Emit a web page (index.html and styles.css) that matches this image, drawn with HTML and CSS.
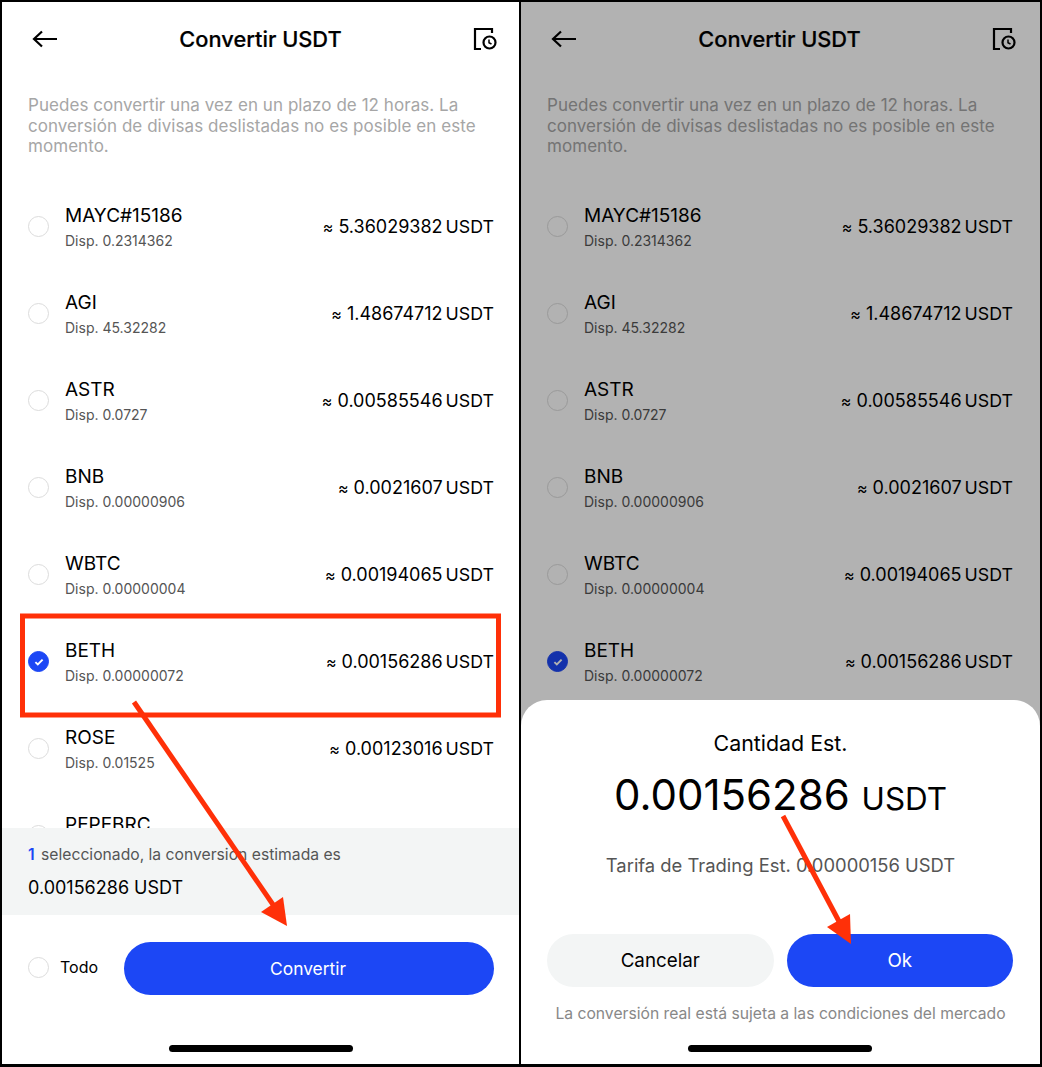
FILE: index.html
```html
<!DOCTYPE html>
<html lang="es">
<head>
    <meta charset="UTF-8">
    <meta name="viewport" content="width=device-width, initial-scale=1.0">
    <title>Convertir USDT</title>
    <link rel="stylesheet" href="styles.css">
</head>
<body>
    <div class="frame">
        <!-- pantalla izquierda -->
        <section class="phone">
            <header class="topbar">
                <svg class="icon-back" width="28" height="20" viewBox="0 0 28 20"><path d="M26 10H3M11 2.5 3 10l8 7.5" fill="none" stroke="#000" stroke-width="2.2"/></svg>
                <h1>Convertir USDT</h1>
                <svg class="icon-history" width="26" height="26" viewBox="0 0 26 26"><path d="M20 7V3H3v20h6" fill="none" stroke="#000" stroke-width="2.2"/><circle cx="17.5" cy="16.5" r="6" fill="none" stroke="#000" stroke-width="2.2"/><path d="M17 13.5v3.2l2.5 1.3" fill="none" stroke="#000" stroke-width="1.5"/></svg>
            </header>
            <p class="note">Puedes convertir una vez en un plazo de 12 horas. La conversión de divisas deslistadas no es posible en este momento.</p>
            <div class="list">
                <div class="row"><span class="radio"></span><div class="coin"><div class="name">MAYC#15186</div><div class="avail">Disp. 0.2314362</div></div><div class="value"><span class="approx">≈</span> 5.36029382<span class="unit">USDT</span></div></div>
                <div class="row"><span class="radio"></span><div class="coin"><div class="name">AGI</div><div class="avail">Disp. 45.32282</div></div><div class="value"><span class="approx">≈</span> 1.48674712<span class="unit">USDT</span></div></div>
                <div class="row"><span class="radio"></span><div class="coin"><div class="name">ASTR</div><div class="avail">Disp. 0.0727</div></div><div class="value"><span class="approx">≈</span> 0.00585546<span class="unit">USDT</span></div></div>
                <div class="row"><span class="radio"></span><div class="coin"><div class="name">BNB</div><div class="avail">Disp. 0.00000906</div></div><div class="value"><span class="approx">≈</span> 0.0021607<span class="unit">USDT</span></div></div>
                <div class="row"><span class="radio"></span><div class="coin"><div class="name">WBTC</div><div class="avail">Disp. 0.00000004</div></div><div class="value"><span class="approx">≈</span> 0.00194065<span class="unit">USDT</span></div></div>
                <div class="row"><span class="radio checked"><svg width="10" height="8" viewBox="0 0 12 10"><path d="M1.5 5.2 4.5 8l6-6" fill="none" stroke="#fff" stroke-width="2.4"/></svg></span><div class="coin"><div class="name">BETH</div><div class="avail">Disp. 0.00000072</div></div><div class="value"><span class="approx">≈</span> 0.00156286<span class="unit">USDT</span></div></div>
                <div class="row"><span class="radio"></span><div class="coin"><div class="name">ROSE</div><div class="avail">Disp. 0.01525</div></div><div class="value"><span class="approx">≈</span> 0.00123016<span class="unit">USDT</span></div></div>
                <div class="row row-cut"><span class="radio"></span><div class="coin"><div class="name">PEPEBRC</div></div></div>
            </div>
            <div class="summary">
                <div class="summary-label"><b>1</b> seleccionado, la conversión estimada es</div>
                <div class="summary-value">0.00156286 USDT</div>
            </div>
            <div class="actions">
                <span class="radio"></span>
                <span class="all">Todo</span>
                <button class="btn btn-primary btn-convert">Convertir</button>
            </div>
            <div class="home-bar"></div>
            <svg class="marks" width="519" height="1067" viewBox="0 0 519 1067">
                <rect x="22.5" y="616" width="476" height="99" fill="none" stroke="#ff3008" stroke-width="5"/>
                <path d="M134 702 276 909" stroke="#ff3008" stroke-width="5" fill="none"/>
                <path d="M287 926 283 897 261 912Z" fill="#ff3008"/>
            </svg>
        </section>

        <!-- pantalla derecha con el dialogo -->
        <section class="phone phone-dialog">
            <header class="topbar">
                <svg class="icon-back" width="28" height="20" viewBox="0 0 28 20"><path d="M26 10H3M11 2.5 3 10l8 7.5" fill="none" stroke="#000" stroke-width="2.2"/></svg>
                <h1>Convertir USDT</h1>
                <svg class="icon-history" width="26" height="26" viewBox="0 0 26 26"><path d="M20 7V3H3v20h6" fill="none" stroke="#000" stroke-width="2.2"/><circle cx="17.5" cy="16.5" r="6" fill="none" stroke="#000" stroke-width="2.2"/><path d="M17 13.5v3.2l2.5 1.3" fill="none" stroke="#000" stroke-width="1.5"/></svg>
            </header>
            <p class="note">Puedes convertir una vez en un plazo de 12 horas. La conversión de divisas deslistadas no es posible en este momento.</p>
            <div class="list">
                <div class="row"><span class="radio"></span><div class="coin"><div class="name">MAYC#15186</div><div class="avail">Disp. 0.2314362</div></div><div class="value"><span class="approx">≈</span> 5.36029382<span class="unit">USDT</span></div></div>
                <div class="row"><span class="radio"></span><div class="coin"><div class="name">AGI</div><div class="avail">Disp. 45.32282</div></div><div class="value"><span class="approx">≈</span> 1.48674712<span class="unit">USDT</span></div></div>
                <div class="row"><span class="radio"></span><div class="coin"><div class="name">ASTR</div><div class="avail">Disp. 0.0727</div></div><div class="value"><span class="approx">≈</span> 0.00585546<span class="unit">USDT</span></div></div>
                <div class="row"><span class="radio"></span><div class="coin"><div class="name">BNB</div><div class="avail">Disp. 0.00000906</div></div><div class="value"><span class="approx">≈</span> 0.0021607<span class="unit">USDT</span></div></div>
                <div class="row"><span class="radio"></span><div class="coin"><div class="name">WBTC</div><div class="avail">Disp. 0.00000004</div></div><div class="value"><span class="approx">≈</span> 0.00194065<span class="unit">USDT</span></div></div>
                <div class="row"><span class="radio checked"><svg width="10" height="8" viewBox="0 0 12 10"><path d="M1.5 5.2 4.5 8l6-6" fill="none" stroke="#fff" stroke-width="2.4"/></svg></span><div class="coin"><div class="name">BETH</div><div class="avail">Disp. 0.00000072</div></div><div class="value"><span class="approx">≈</span> 0.00156286<span class="unit">USDT</span></div></div>
            </div>
            <div class="dim"></div>
            <div class="sheet">
                <div class="sheet-title">Cantidad Est.</div>
                <div class="sheet-amount">0.00156286 <span class="sheet-unit">USDT</span></div>
                <div class="sheet-fee">Tarifa de Trading Est. 0.00000156 USDT</div>
                <div class="sheet-buttons">
                    <button class="btn btn-light">Cancelar</button>
                    <button class="btn btn-primary">Ok</button>
                </div>
                <div class="sheet-foot">La conversión real está sujeta a las condiciones del mercado</div>
            </div>
            <div class="home-bar"></div>
            <svg class="marks" width="523" height="1067" viewBox="0 0 523 1067">
                <path d="M264 816 323 927" stroke="#ff3008" stroke-width="5" fill="none"/>
                <path d="M332 944 331 914 308 927Z" fill="#ff3008"/>
            </svg>
        </section>
    </div>
</body>
</html>
```

FILE: styles.css
```css
* {
    box-sizing: border-box;
}
body {
    margin: 0;
    background: #fff;
    font-family: Inter, "Liberation Sans", sans-serif;
    color: #000;
}
.frame {
    display: flex;
    width: 1042px;
    height: 1067px;
    overflow: hidden;
}
.phone {
    position: relative;
    display: flex;
    flex-direction: column;
    width: 519px;
    height: 1067px;
    border-left: 2px solid #000;
    border-top: 2px solid #000;
    border-bottom: 3px solid #000;
    background: #fff;
    overflow: hidden;
}
.phone-dialog {
    width: 523px;
    border-right: 2px solid #000;
}
.topbar {
    display: grid;
    grid-template-columns: 1fr auto 1fr;
    align-items: center;
    width: 517px;
    height: 74px;
    padding: 0 22px;
}
.topbar h1 {
    margin: 0;
    font-size: 21.8px;
    font-weight: 500;
    -webkit-text-stroke: 0.2px #000;
}
.icon-back {
    margin-left: 7px;
}
.icon-history {
    justify-self: end;
    margin-right: -1px;
}
.note {
    margin: 19px 0 0;
    padding: 0 26px;
    width: 517px;
    height: 77px;
    font-size: 17px;
    line-height: 20.5px;
    letter-spacing: 0.05px;
    color: #a6a6a6;
}
.list {
    width: 517px;
    height: 645px;
    margin-top: 11px;
    overflow: hidden;
    flex-shrink: 0;
}
.row {
    display: flex;
    align-items: center;
    height: 87px;
    padding: 0 25px 0 26px;
}
.row-cut .coin {
    padding-bottom: 22px;
}
.radio {
    display: flex;
    align-items: center;
    justify-content: center;
    flex-shrink: 0;
    width: 21px;
    height: 21px;
    border: 1.5px solid #dcdcdc;
    border-radius: 50%;
}
.radio.checked {
    background: #1c47f5;
    border-color: #1c47f5;
}
.coin {
    flex: 1;
    margin-left: 16px;
}
.name {
    font-size: 19px;
    line-height: 24px;
}
.avail {
    margin-top: 4px;
    font-size: 14px;
    line-height: 18px;
    color: #555;
}
.value {
    font-size: 18px;
    white-space: nowrap;
}
.approx {
    font-size: 16px;
}
.unit {
    margin-left: 3px;
    font-size: 17.8px;
}
.summary {
    width: 100%;
    height: 87px;
    padding: 17px 26px 0;
    background: #f3f5f5;
    flex-shrink: 0;
}
.summary-label {
    font-size: 15.7px;
    line-height: 20px;
    color: #555;
}
.summary-label b {
    margin-right: 2px;
    color: #1c47f5;
    font-weight: 600;
}
.summary-value {
    margin-top: 11px;
    font-size: 18px;
    line-height: 24px;
}
.actions {
    display: flex;
    align-items: center;
    width: 517px;
    height: 53px;
    margin-top: 27px;
    padding: 0 25px 0 26px;
}
.actions .radio {
    margin-bottom: 2px;
}
.all {
    margin-bottom: 3px;
    margin-left: 11px;
    font-size: 16px;
    width: 64px;
}
.btn {
    height: 53px;
    border: 0;
    border-radius: 27px;
    font-family: inherit;
    font-size: 17.4px;
}
.btn-primary {
    background: #1c47f5;
    color: #fff;
}
.btn-light {
    background: #f3f5f5;
    color: #000;
}
.btn-convert {
    flex: 1;
    padding-right: 8px;
}
.home-bar {
    position: absolute;
    left: 167px;
    bottom: 12px;
    width: 184px;
    height: 7px;
    border-radius: 4px;
    background: #000;
}
.dim {
    position: absolute;
    inset: 0;
    background: rgba(0, 0, 0, 0.3);
}
.sheet {
    position: absolute;
    left: 0;
    right: 0;
    bottom: 0;
    height: 364px;
    padding-top: 30px;
    background: #fff;
    border-radius: 26px 26px 0 0;
    text-align: center;
}
.sheet-title {
    font-size: 21.4px;
    line-height: 26px;
}
.sheet-amount {
    margin-top: 13px;
    font-size: 42px;
    line-height: 52px;
}
.sheet-unit {
    font-size: 31.4px;
}
.sheet-fee {
    margin-top: 28px;
    font-size: 18.4px;
    line-height: 24px;
    color: #555;
}
.sheet-buttons {
    display: flex;
    gap: 13px;
    margin-top: 57px;
    padding: 0 27px 0 26px;
}
.sheet-buttons .btn {
    flex: 1;
    font-size: 18.8px;
}
.sheet-foot {
    margin-top: 17px;
    font-size: 15.7px;
    line-height: 20px;
    color: #888;
}
.marks {
    position: absolute;
    left: -2px;
    top: -2px;
    pointer-events: none;
}
```
